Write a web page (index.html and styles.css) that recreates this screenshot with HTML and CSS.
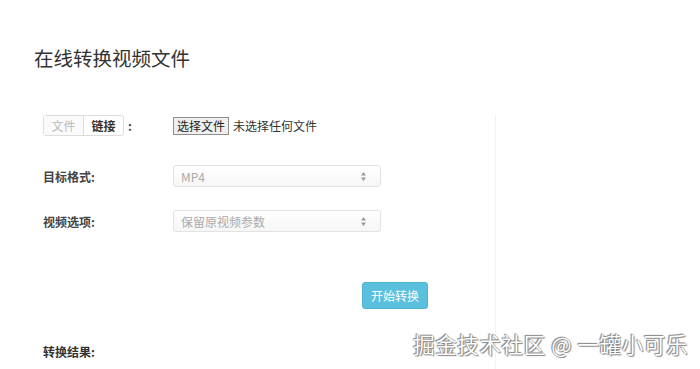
FILE: index.html
```html
<!DOCTYPE html>
<html lang="zh-CN">
<head>
  <meta charset="UTF-8">
  <title>在线转换视频文件</title>
  <link rel="stylesheet" href="styles.css">
</head>
<body>
  <main class="page">
    <h1 class="title">在线转换视频文件</h1>

    <div class="layout">
      <form class="convert-form">
        <div class="row row-source">
          <div class="label">
            <div class="tabs">
              <span class="tab active">文件</span>
              <span class="tab">链接</span>
            </div>
            <span class="colon">:</span>
          </div>
          <div class="field file-field">
            <span class="file-btn">选择文件</span>
            <span class="file-name">未选择任何文件</span>
          </div>
        </div>

        <div class="row row-format">
          <div class="label">目标格式:</div>
          <div class="field">
            <div class="select">
              <span>MP4</span>
              <svg class="arrows" width="5" height="9" viewBox="0 0 5 9"><path d="M2.5 0 L5 3.5 H0 Z M2.5 9 L5 5.5 H0 Z" fill="#999"/></svg>
            </div>
          </div>
        </div>

        <div class="row row-option">
          <div class="label">视频选项:</div>
          <div class="field">
            <div class="select">
              <span>保留原视频参数</span>
              <svg class="arrows" width="5" height="9" viewBox="0 0 5 9"><path d="M2.5 0 L5 3.5 H0 Z M2.5 9 L5 5.5 H0 Z" fill="#999"/></svg>
            </div>
          </div>
        </div>

        <div class="actions">
          <button type="button" class="button">开始转换</button>
        </div>

        <div class="result-label">转换结果:</div>
      </form>
      <aside class="side"></aside>
    </div>
  </main>

  <div class="watermark">掘金技术社区 @ 一罐小可乐</div>
</body>
</html>
```

FILE: styles.css
```css
body {
  margin: 0;
  font-family: "Noto Sans CJK SC", "Noto Sans", sans-serif;
  font-size: 12px;
  color: #333;
  background: #fff;
  height: 369px;
  overflow: hidden;
}
.page {
  padding: 44px 0 0 34px;
}
.title {
  margin: 0;
  font-size: 19.5px;
  font-weight: 400;
  line-height: 28px;
  color: #333;
}
.layout {
  display: flex;
  margin-top: 43px;
  padding-left: 9px;
}
.convert-form {
  width: 452px;
  border-right: 1px solid #f3f3f3;
  min-height: 260px;
}
.row {
  display: flex;
  align-items: center;
}
.label {
  width: 130px;
  font-weight: 700;
  color: #444;
  display: flex;
  align-items: center;
}
.tabs {
  display: flex;
  border: 1px solid #ddd;
  border-radius: 3px;
  height: 19px;
}
.tab {
  width: 39px;
  text-align: center;
  line-height: 19px;
  font-weight: 700;
  color: #333;
}
.tab.active {
  color: #bbb;
  font-weight: 400;
  background: #fafafa;
  border-right: 1px solid #ddd;
}
.colon {
  margin-left: 4px;
}
.file-field {
  display: flex;
  align-items: center;
}
.file-btn {
  border: 1px solid #8f8f8f;
  background: #efefef;
  padding: 0 3px;
  line-height: 16px;
  font-size: 12px;
  color: #222;
}
.file-name {
  margin-left: 4px;
  color: #333;
}
.row-format {
  margin-top: 29px;
}
.row-option {
  margin-top: 23px;
}
.select {
  width: 199px;
  height: 20px;
  border: 1px solid #e2e2e2;
  border-radius: 3px;
  background: linear-gradient(#fff, #f6f6f6);
  display: flex;
  align-items: center;
  justify-content: space-between;
  padding-left: 7px;
  color: #aaa;
}
.arrows {
  margin-right: 14px;
}
.actions {
  margin-top: 50px;
  padding-left: 319px;
}
.button {
  background: #5bc0de;
  color: #fff;
  border: 1px solid #4fb4d2;
  border-radius: 3px;
  width: 66px;
  height: 27px;
  font-family: inherit;
  font-size: 12px;
  padding: 0;
  cursor: pointer;
}
.result-label {
  margin-top: 34px;
  font-weight: 700;
}
.watermark {
  position: absolute;
  right: 12px;
  bottom: 10px;
  font-size: 21.5px;
  letter-spacing: 0.6px;
  color: #fff;
  text-shadow: 0 0 1px #666, 1px 1px 1px #888, -1px -1px 1px #888;
}
```
